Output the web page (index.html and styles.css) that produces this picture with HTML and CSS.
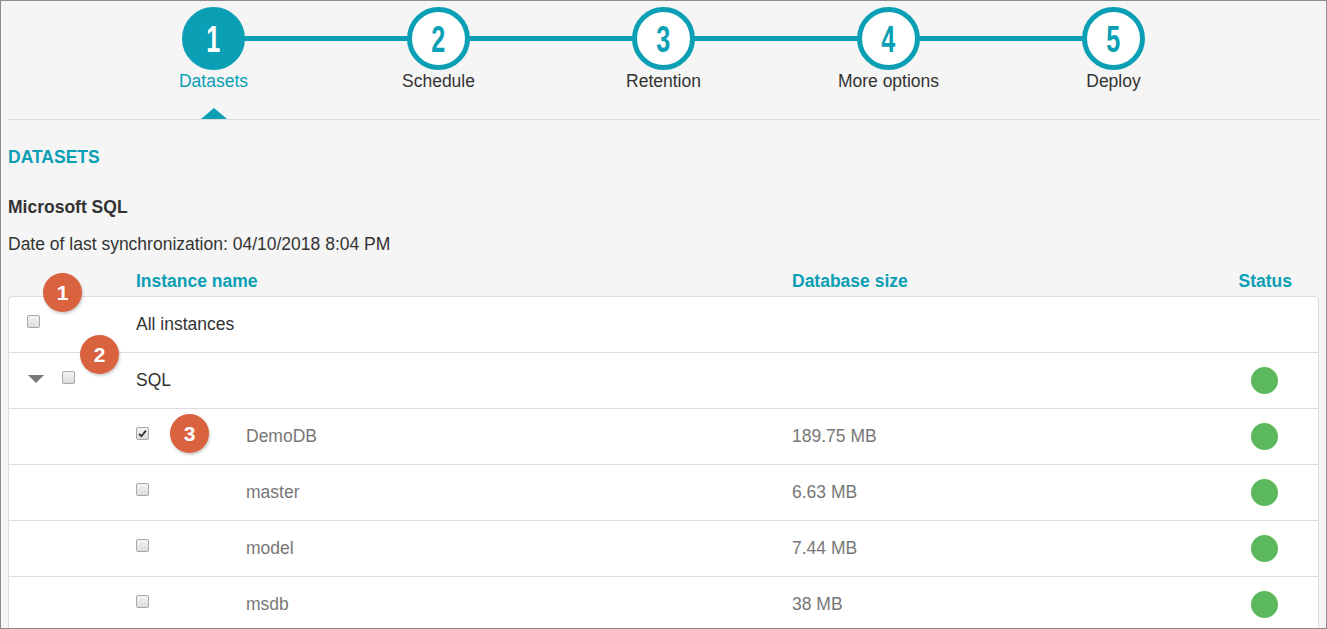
FILE: index.html
```html
<!DOCTYPE html>
<html>
<head>
<meta charset="utf-8">
<link rel="stylesheet" href="styles.css">
</head>
<body>
<div class="frame">
  <div class="wizard">
    <div class="steps">
      <div class="step active"><div class="circle"><span class="num">1</span></div><div class="label">Datasets</div><div class="pointer"></div></div>
      <div class="step"><div class="circle"><span class="num">2</span></div><div class="label">Schedule</div></div>
      <div class="step"><div class="circle"><span class="num">3</span></div><div class="label">Retention</div></div>
      <div class="step"><div class="circle"><span class="num">4</span></div><div class="label">More options</div></div>
      <div class="step"><div class="circle"><span class="num">5</span></div><div class="label">Deploy</div></div>
    </div>
  </div>
  <div class="content">
    <h2 class="section-title">DATASETS</h2>
    <h3 class="source">Microsoft SQL</h3>
    <p class="sync">Date of last synchronization: 04/10/2018 8:04 PM</p>
    <div class="thead">
      <div class="c-left"></div>
      <div class="c-name">Instance name</div>
      <div class="c-size">Database size</div>
      <div class="c-status">Status</div>
    </div>
    <div class="table">
      <div class="row">
        <div class="c-left"><span class="cb cb-all"></span></div>
        <div class="c-name dark">All instances</div>
        <div class="c-size"></div>
        <div class="c-status"></div>
        <span class="badge b1">1</span>
      </div>
      <div class="row">
        <div class="c-left"><span class="caret"></span><span class="cb cb-sql"></span></div>
        <div class="c-name dark">SQL</div>
        <div class="c-size"></div>
        <div class="c-status"><span class="dot"></span></div>
        <span class="badge b2">2</span>
      </div>
      <div class="row">
        <div class="c-left"></div>
        <div class="c-name"><span class="cbcell"><span class="cb checked"><svg viewBox="0 0 13 13" width="13" height="13"><path d="M3 6.8 L5.4 9.2 L10 3.6" fill="none" stroke="#333" stroke-width="1.8"/></svg></span></span>DemoDB</div>
        <div class="c-size">189.75 MB</div>
        <div class="c-status"><span class="dot"></span></div>
        <span class="badge b3">3</span>
      </div>
      <div class="row">
        <div class="c-left"></div>
        <div class="c-name"><span class="cbcell"><span class="cb"></span></span>master</div>
        <div class="c-size">6.63 MB</div>
        <div class="c-status"><span class="dot"></span></div>
      </div>
      <div class="row">
        <div class="c-left"></div>
        <div class="c-name"><span class="cbcell"><span class="cb"></span></span>model</div>
        <div class="c-size">7.44 MB</div>
        <div class="c-status"><span class="dot"></span></div>
      </div>
      <div class="row">
        <div class="c-left"></div>
        <div class="c-name"><span class="cbcell"><span class="cb"></span></span>msdb</div>
        <div class="c-size">38 MB</div>
        <div class="c-status"><span class="dot"></span></div>
      </div>
    </div>
  </div>
</div>
</body>
</html>
```
FILE: styles.css
```css
* { box-sizing: border-box; }
html, body { margin: 0; padding: 0; }
body {
  font-family: "Liberation Sans", Arial, sans-serif;
  color: #333;
  background: #fff;
}
.frame {
  width: 1327px;
  height: 629px;
  border: 1px solid #8c8c8c;
  background: #f5f5f5;
  overflow: hidden;
}
.wizard {
  margin: 0 7px;
  padding-top: 6px;
  height: 119px;
  border-bottom: 1px solid #dcdcdc;
}
.steps {
  position: relative;
  width: 1125px;
  margin: 0 auto;
  display: flex;
}
.steps::before {
  content: "";
  position: absolute;
  left: 112px;
  right: 112px;
  top: 29px;
  height: 5px;
  background: #0a9fb5;
}
.step {
  position: relative;
  width: 225px;
  display: flex;
  flex-direction: column;
  align-items: center;
}
.circle {
  position: relative;
  width: 63px;
  height: 63px;
  border-radius: 50%;
  border: 5px solid #0a9fb5;
  background: #fff;
  color: #0a9fb5;
  display: flex;
  align-items: center;
  justify-content: center;
}
.num {
  display: block;
  font-family: "Liberation Sans", Arial, sans-serif;
  font-weight: bold;
  font-size: 37px;
  line-height: 37px;
  transform: scaleX(0.68);
  margin-top: 1px;
}
.step.active .circle {
  background: #0a9fb5;
  color: #fff;
}
.label {
  margin-top: 1px;
  font-size: 17.5px;
  line-height: 20px;
  color: #333;
}
.step.active .label { color: #0a9fb5; }
.pointer {
  margin-top: 17px;
  width: 0;
  height: 0;
  border-left: 13px solid transparent;
  border-right: 13px solid transparent;
  border-bottom: 11px solid #0a9fb5;
}
.content {
  padding: 0 7px;
}
.section-title {
  margin: 0;
  padding-top: 27px;
  font-size: 17.5px;
  line-height: 20px;
  font-weight: bold;
  color: #0a9fb5;
}
.source {
  margin: 0;
  padding-top: 30px;
  font-size: 17.5px;
  line-height: 20px;
  font-weight: bold;
  color: #333;
}
.sync {
  margin: 0;
  padding-top: 17px;
  font-size: 17.5px;
  line-height: 20px;
  color: #333;
}
.thead {
  display: flex;
  padding: 0 1px;
  margin-top: 17px;
  height: 20px;
  align-items: center;
  font-weight: bold;
  font-size: 17.5px;
  color: #0a9fb5;
}
.c-left { width: 127px; flex: none; display: flex; align-items: center; }
.c-name { width: 656px; flex: none; display: flex; align-items: center; }
.c-size { flex: 1; display: flex; align-items: center; }
.c-status { width: 108px; flex: none; display: flex; justify-content: center; align-items: center; }
.thead .c-status { justify-content: flex-end; padding-right: 26px; }
.table {
  margin-top: 5px;
  background: #fff;
  border: 1px solid #dcdcdc;
  border-radius: 4px 4px 0 0;
}
.row {
  position: relative;
  display: flex;
  height: 56px;
  border-bottom: 1px solid #dcdcdc;
  font-size: 17.5px;
  color: #777;
}
.dark { color: #333; }
.cb {
  display: inline-block;
  width: 13px;
  height: 13px;
  border: 1px solid #a8a8a8;
  border-radius: 2px;
  background: linear-gradient(#f4f4f4, #dcdcdc);
  position: relative;
  top: -3px;
}
.cb svg { display: block; position: absolute; left: -1px; top: -1px; }
.cb-all { margin-left: 18px; }
.caret {
  margin-left: 19px;
  width: 0;
  height: 0;
  border-left: 8px solid transparent;
  border-right: 8px solid transparent;
  border-top: 8px solid #777;
  position: relative;
  top: -2px;
}
.cb-sql { margin-left: 18px; }
.cbcell { width: 110px; flex: none; display: flex; align-items: center; }
.dot {
  width: 27px;
  height: 27px;
  border-radius: 50%;
  background: #5cb85c;
}
.badge {
  position: absolute;
  width: 39px;
  height: 39px;
  border-radius: 50%;
  background: #d9623f;
  color: #fff;
  font-weight: bold;
  font-size: 21px;
  line-height: 39px;
  text-align: center;
  box-shadow: 1px 2px 3px rgba(0,0,0,0.2);
}
.b1 { left: 34px; top: -24px; }
.b2 { left: 71px; top: -18px; }
.b3 { left: 161px; top: 5px; }
```
